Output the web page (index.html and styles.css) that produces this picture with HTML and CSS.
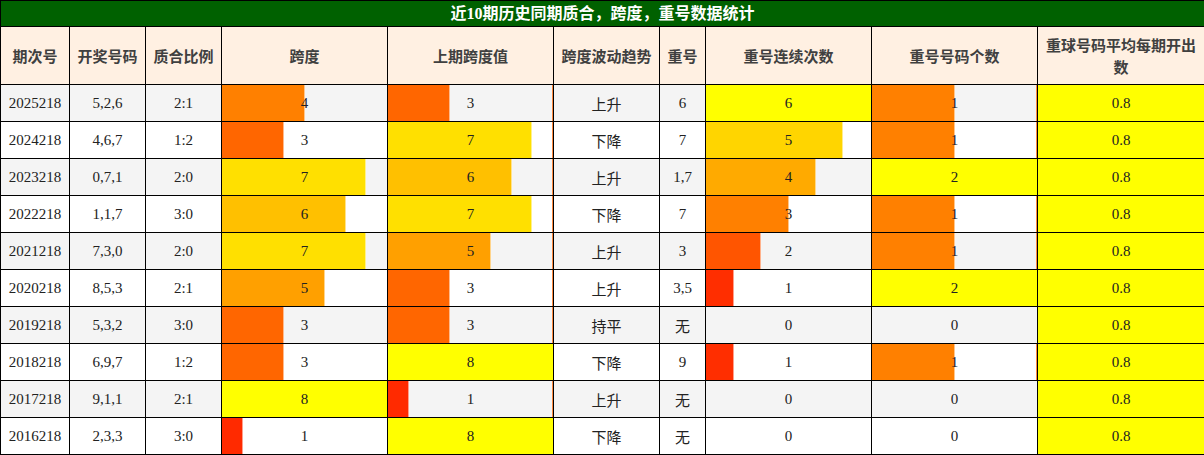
FILE: index.html
```html
<!DOCTYPE html>
<html lang="zh-CN">
<head>
<meta charset="utf-8">
<title>近10期历史同期质合，跨度，重号数据统计</title>
<link rel="stylesheet" href="styles.css">
</head>
<body>
<table class="stats">
  <colgroup>
    <col class="c-issue"><col class="c-nums"><col class="c-ratio"><col class="c-bar"><col class="c-bar">
    <col class="c-trend"><col class="c-rep"><col class="c-bar"><col class="c-bar"><col class="c-last">
  </colgroup>
  <thead>
    <tr class="title-row"><th colspan="10">近10期历史同期质合，跨度，重号数据统计</th></tr>
    <tr class="head-row">
      <th>期次号</th><th>开奖号码</th><th>质合比例</th><th>跨度</th><th>上期跨度值</th>
      <th>跨度波动趋势</th><th>重号</th><th>重号连续次数</th><th>重号号码个数</th><th class="wrap">重球号码平均每期开出数</th>
    </tr>
  </thead>
  <tbody>
    <tr class="alt">
      <td>2025218</td><td>5,2,6</td><td>2:1</td>
      <td class="bc"><span class="bar" style="width:50%;background:#ff8000"></span><span class="val">4</span></td>
      <td class="bc edge"><span class="bar" style="width:37.5%;background:#ff6600"></span><span class="val">3</span></td>
      <td class="cn">上升</td><td>6</td>
      <td class="bc"><span class="bar full" style="width:100%;background:#ffff00"></span><span class="val">6</span></td>
      <td class="bc edge"><span class="bar" style="width:50%;background:#ff8000"></span><span class="val">1</span></td>
      <td class="yel">0.8</td>
    </tr>
    <tr>
      <td>2024218</td><td>4,6,7</td><td>1:2</td>
      <td class="bc"><span class="bar" style="width:37.5%;background:#ff6600"></span><span class="val">3</span></td>
      <td class="bc edge"><span class="bar" style="width:87.5%;background:#ffe000"></span><span class="val">7</span></td>
      <td class="cn">下降</td><td>7</td>
      <td class="bc"><span class="bar" style="width:83.3%;background:#ffd500"></span><span class="val">5</span></td>
      <td class="bc edge"><span class="bar" style="width:50%;background:#ff8000"></span><span class="val">1</span></td>
      <td class="yel">0.8</td>
    </tr>
    <tr class="alt">
      <td>2023218</td><td>0,7,1</td><td>2:0</td>
      <td class="bc"><span class="bar" style="width:87.5%;background:#ffe000"></span><span class="val">7</span></td>
      <td class="bc edge"><span class="bar" style="width:75%;background:#ffc000"></span><span class="val">6</span></td>
      <td class="cn">上升</td><td>1,7</td>
      <td class="bc"><span class="bar" style="width:66.7%;background:#ffaa00"></span><span class="val">4</span></td>
      <td class="bc edge"><span class="bar full" style="width:100%;background:#ffff00"></span><span class="val">2</span></td>
      <td class="yel">0.8</td>
    </tr>
    <tr>
      <td>2022218</td><td>1,1,7</td><td>3:0</td>
      <td class="bc"><span class="bar" style="width:75%;background:#ffc000"></span><span class="val">6</span></td>
      <td class="bc edge"><span class="bar" style="width:87.5%;background:#ffe000"></span><span class="val">7</span></td>
      <td class="cn">下降</td><td>7</td>
      <td class="bc"><span class="bar" style="width:50%;background:#ff8000"></span><span class="val">3</span></td>
      <td class="bc edge"><span class="bar" style="width:50%;background:#ff8000"></span><span class="val">1</span></td>
      <td class="yel">0.8</td>
    </tr>
    <tr class="alt">
      <td>2021218</td><td>7,3,0</td><td>2:0</td>
      <td class="bc"><span class="bar" style="width:87.5%;background:#ffe000"></span><span class="val">7</span></td>
      <td class="bc edge"><span class="bar" style="width:62.5%;background:#ffa000"></span><span class="val">5</span></td>
      <td class="cn">上升</td><td>3</td>
      <td class="bc"><span class="bar" style="width:33.3%;background:#ff5500"></span><span class="val">2</span></td>
      <td class="bc edge"><span class="bar" style="width:50%;background:#ff8000"></span><span class="val">1</span></td>
      <td class="yel">0.8</td>
    </tr>
    <tr>
      <td>2020218</td><td>8,5,3</td><td>2:1</td>
      <td class="bc"><span class="bar" style="width:62.5%;background:#ffa000"></span><span class="val">5</span></td>
      <td class="bc edge"><span class="bar" style="width:37.5%;background:#ff6600"></span><span class="val">3</span></td>
      <td class="cn">上升</td><td>3,5</td>
      <td class="bc"><span class="bar" style="width:16.7%;background:#ff2e00"></span><span class="val">1</span></td>
      <td class="bc edge"><span class="bar full" style="width:100%;background:#ffff00"></span><span class="val">2</span></td>
      <td class="yel">0.8</td>
    </tr>
    <tr class="alt">
      <td>2019218</td><td>5,3,2</td><td>3:0</td>
      <td class="bc"><span class="bar" style="width:37.5%;background:#ff6600"></span><span class="val">3</span></td>
      <td class="bc edge"><span class="bar" style="width:37.5%;background:#ff6600"></span><span class="val">3</span></td>
      <td class="cn">持平</td><td class="cn">无</td>
      <td class="bc"><span class="val">0</span></td>
      <td class="bc"><span class="val">0</span></td>
      <td class="yel">0.8</td>
    </tr>
    <tr>
      <td>2018218</td><td>6,9,7</td><td>1:2</td>
      <td class="bc"><span class="bar" style="width:37.5%;background:#ff6600"></span><span class="val">3</span></td>
      <td class="bc edge"><span class="bar full" style="width:100%;background:#ffff00"></span><span class="val">8</span></td>
      <td class="cn">下降</td><td>9</td>
      <td class="bc"><span class="bar" style="width:16.7%;background:#ff2e00"></span><span class="val">1</span></td>
      <td class="bc edge"><span class="bar" style="width:50%;background:#ff8000"></span><span class="val">1</span></td>
      <td class="yel">0.8</td>
    </tr>
    <tr class="alt">
      <td>2017218</td><td>9,1,1</td><td>2:1</td>
      <td class="bc"><span class="bar full" style="width:100%;background:#ffff00"></span><span class="val">8</span></td>
      <td class="bc edge"><span class="bar" style="width:12.5%;background:#ff2a00"></span><span class="val">1</span></td>
      <td class="cn">上升</td><td class="cn">无</td>
      <td class="bc"><span class="val">0</span></td>
      <td class="bc"><span class="val">0</span></td>
      <td class="yel">0.8</td>
    </tr>
    <tr>
      <td>2016218</td><td>2,3,3</td><td>3:0</td>
      <td class="bc"><span class="bar" style="width:12.5%;background:#ff2a00"></span><span class="val">1</span></td>
      <td class="bc edge"><span class="bar full" style="width:100%;background:#ffff00"></span><span class="val">8</span></td>
      <td class="cn">下降</td><td class="cn">无</td>
      <td class="bc"><span class="val">0</span></td>
      <td class="bc"><span class="val">0</span></td>
      <td class="yel">0.8</td>
    </tr>
  </tbody>
</table>
</body>
</html>
```

FILE: styles.css
```css
html, body {
  margin: 0;
  padding: 0;
  background: #ffffff;
}

.stats {
  border-collapse: collapse;
  table-layout: fixed;
  width: 1204px;
  font-family: "Liberation Serif", "Noto Sans CJK SC", serif;
  font-size: 15px;
  color: #222222;
}

.c-issue { width: 69px; }
.c-nums { width: 76px; }
.c-ratio { width: 76px; }
.c-bar { width: 166px; }
.c-trend { width: 106px; }
.c-rep { width: 46px; }
.c-last { width: 167px; }

.stats th,
.stats td {
  border: 1px solid #000000;
  text-align: center;
  vertical-align: middle;
  padding: 0 4px;
}

.title-row th {
  height: 25px;
  background: #006100;
  color: #ffffff;
  font-family: "Liberation Serif", "Noto Sans CJK SC", sans-serif;
  font-weight: bold;
  font-size: 16px;
  line-height: 20px;
}

.head-row th {
  height: 57px;
  background: #fff0e2;
  color: #404040;
  font-family: "Noto Sans CJK SC", sans-serif;
  font-weight: bold;
  font-size: 15px;
  line-height: 22px;
}

.stats tbody tr {
  height: 37px;
  background: #ffffff;
}

.stats tbody tr.alt {
  background: #f4f4f4;
}

.stats td.cn {
  font-family: "Noto Sans CJK SC", sans-serif;
  font-size: 15px;
}

.stats td.bc {
  position: relative;
  padding: 0;
}

.bar {
  position: absolute;
  left: 0;
  top: 0;
  bottom: 0;
  box-sizing: border-box;
  border-right: 1px solid rgba(255, 255, 255, 0.55);
}

.bar.full {
  border-right: none;
}

.val {
  position: relative;
}

.stats td.edge {
  box-shadow: inset -1px 0 0 #ff8a40;
}

.stats td.yel {
  background: #ffff00;
}
```
